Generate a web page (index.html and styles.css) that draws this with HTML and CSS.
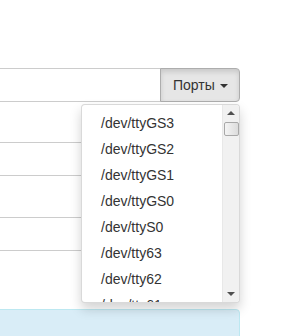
FILE: index.html
```html
<!DOCTYPE html>
<html>

<head>
    <meta charset="UTF-8">
    <link rel="stylesheet" href="styles.css">
    <title>Ports</title>
</head>

<body>
    <div class="panel">
        <div class="input-group">
            <input type="text" class="form-control">
            <div class="group-btn">
                <button class="btn btn-default active">Порты <span class="caret"></span></button>
                <div class="dropdown-menu">
                    <ul class="port-list">
                        <li>/dev/ttyGS3</li>
                        <li>/dev/ttyGS2</li>
                        <li>/dev/ttyGS1</li>
                        <li>/dev/ttyGS0</li>
                        <li>/dev/ttyS0</li>
                        <li>/dev/tty63</li>
                        <li>/dev/tty62</li>
                        <li>/dev/tty61</li>
                    </ul>
                    <div class="scrollbar">
                        <span class="arrow-up"></span>
                        <span class="thumb"></span>
                        <span class="track"></span>
                        <span class="arrow-down"></span>
                    </div>
                </div>
            </div>
        </div>
        <input type="text" class="form-control field">
        <input type="text" class="form-control field">
        <div class="actions">
            <button class="btn btn-danger">Стоп</button>
        </div>
        <div class="alert"></div>
    </div>
</body>

</html>
```
FILE: styles.css
```css
*,
*::before,
*::after {
    box-sizing: border-box;
    padding: 0;
    margin: 0;
}

html,
body {
    overflow: hidden;
    height: 336px;
}

body {
    background: #fff;
    font-family: "Liberation Sans", Arial, sans-serif;
    font-size: 14px;
    color: #333;
}

.panel {
    width: 300px;
    margin-left: -60px;
    padding-top: 68px;
    display: flex;
    flex-direction: column;
}

.form-control {
    display: block;
    width: 100%;
    height: 34px;
    padding: 6px 12px;
    border: 1px solid #ccc;
    border-radius: 4px;
    background: #fff;
    font: inherit;
}

.input-group {
    display: flex;
}

.input-group>.form-control {
    flex: 1;
    border-radius: 4px 0 0 4px;
}

.group-btn {
    position: relative;
    display: flex;
}

.btn {
    height: 34px;
    padding: 6px 12px;
    border: 1px solid #ccc;
    border-radius: 4px;
    font: inherit;
    font-size: 14px;
    line-height: 20px;
    color: #333;
    background: #fff;
    white-space: nowrap;
}

.group-btn>.btn {
    width: 80px;
    padding: 6px 0 6px 12px;
    margin-left: -1px;
    text-align: left;
    border-radius: 0 4px 4px 0;
}

.btn-default.active {
    background: #e6e6e6;
    border-color: #adadad;
    box-shadow: inset 0 3px 5px rgba(0, 0, 0, 0.125);
}

.caret {
    display: inline-block;
    width: 0;
    height: 0;
    margin-left: 1px;
    vertical-align: middle;
    border-top: 4px solid #333;
    border-left: 4px solid transparent;
    border-right: 4px solid transparent;
}

.dropdown-menu {
    position: absolute;
    top: 36px;
    right: 0;
    z-index: 10;
    display: flex;
    width: 159px;
    height: 199px;
    background: #fff;
    border: 1px solid rgba(0, 0, 0, 0.15);
    border-radius: 4px;
    box-shadow: 0 6px 12px rgba(0, 0, 0, 0.175);
    overflow: hidden;
}

.port-list {
    flex: 1;
    list-style: none;
    padding: 5px 0;
    overflow: hidden;
}

.port-list>li {
    padding: 3px 0 3px 19px;
    line-height: 20px;
    white-space: nowrap;
}

.scrollbar {
    width: 17px;
    display: flex;
    flex-direction: column;
    align-items: center;
    background: #f1f1f1;
    border-left: 1px solid #e8e8e8;
}

.arrow-up,
.arrow-down {
    width: 0;
    height: 0;
    margin: 6px 0;
    border-left: 4px solid transparent;
    border-right: 4px solid transparent;
}

.arrow-up {
    border-bottom: 4px solid #505050;
}

.arrow-down {
    border-top: 4px solid #505050;
}

.thumb {
    width: 15px;
    height: 14px;
    margin-top: 1px;
    border: 1px solid #a8a8a8;
    border-radius: 2px;
    background: linear-gradient(to right, #f4f4f4, #dcdcdc);
}

.track {
    flex: 1;
}

.field {
    margin-top: 40px;
}

.field+.field {
    margin-top: 41px;
}

.actions {
    display: flex;
    justify-content: flex-end;
    margin-top: 16px;
}

.btn-danger {
    color: #fff;
    background: #d9534f;
    border-color: #d43f3a;
}

.alert {
    height: 60px;
    margin-top: 8px;
    background: #d9edf7;
    border: 1px solid #bce8f1;
    border-radius: 4px;
}
```
